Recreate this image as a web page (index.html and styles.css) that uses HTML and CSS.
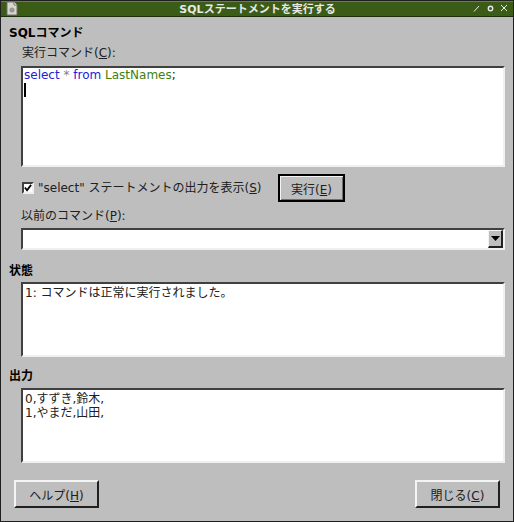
FILE: index.html
```html
<!DOCTYPE html>
<html lang="ja">
<head>
<meta charset="utf-8">
<title>SQLステートメントを実行する</title>
<link rel="stylesheet" href="styles.css">
</head>
<body>
<div class="window">
  <header class="titlebar">
    <svg class="app-icon" width="14" height="15" viewBox="0 0 14 15"><path d="M2 1h7l3 3v10H2z" fill="#d8d8d0" stroke="#707068"/><path d="M9 1v3h3" fill="#fff" stroke="#707068"/><circle cx="7" cy="9" r="2.6" fill="#98988f"/></svg>
    <span class="title">SQLステートメントを実行する</span>
    <div class="win-controls">
      <svg width="9" height="9" viewBox="0 0 9 9"><path d="M2 7.5 7 2" stroke="#e8e8e8" fill="none"/></svg>
      <svg width="9" height="9" viewBox="0 0 9 9"><circle cx="4.5" cy="4.5" r="2.2" stroke="#e8e8e8" stroke-width="1.4" fill="none"/></svg>
      <svg width="9" height="9" viewBox="0 0 9 9"><path d="M1 1l6 6M7 1 1 7" stroke="#e8e8e8" fill="none"/></svg>
    </div>
  </header>
  <main class="content">
    <h2 class="heading first">SQLコマンド</h2>
    <section class="indent">
      <label class="label cmd-label">実行コマンド(<u>C</u>):</label>
      <div class="box editor">
        <div class="line"><span class="kw">select</span> <span class="op">*</span> <span class="kw">from</span> <span class="name">LastNames</span>;</div>
        <span class="caret"></span>
      </div>
      <div class="run-row">
        <span class="check"><svg width="8" height="8" viewBox="0 0 9 9"><path d="M1 4l2.4 3L8 1" stroke="#000" stroke-width="2" fill="none"/></svg></span>
        <span class="label check-label">"select" ステートメントの出力を表示(<u>S</u>)</span>
        <button class="btn default">実行(<u>E</u>)</button>
      </div>
      <label class="label prev-label">以前のコマンド(<u>P</u>):</label>
      <div class="box combo">
        <span class="combo-arrow"><svg width="9" height="5" viewBox="0 0 9 5"><path d="M0 0h9L4.5 5z" fill="#000"/></svg></span>
      </div>
    </section>
    <h2 class="heading status-h">状態</h2>
    <div class="indent"><div class="box log status-box"><div class="line">1: コマンドは正常に実行されました。</div></div></div>
    <h2 class="heading out-h">出力</h2>
    <div class="indent"><div class="box log out-box"><div class="line">0,すずき,鈴木,</div><div class="line">1,やまだ,山田,</div></div></div>
    <footer class="actions">
      <button class="btn wide">ヘルプ(<u>H</u>)</button>
      <button class="btn wide">閉じる(<u>C</u>)</button>
    </footer>
  </main>
</div>
</body>
</html>
```
FILE: styles.css
```css
* { box-sizing: border-box; }
html, body { margin: 0; padding: 0; }
body {
  width: 514px;
  height: 522px;
  overflow: hidden;
  background: #bebebe;
  font-family: "DejaVu Sans", "Noto Sans CJK JP", sans-serif;
  font-size: 12px;
  color: #000;
}
.window {
  width: 514px;
  height: 522px;
  border: 1px solid #202020;
  background: #bebebe;
  display: flex;
  flex-direction: column;
}
.titlebar {
  height: 16px;
  flex: none;
  background: #3b5c17;
  border-bottom: 1px solid #1c2c0c;
  box-shadow: inset 0 1px 0 #5f8a2e;
  display: flex;
  align-items: center;
  position: relative;
  padding: 0 4px;
}
.app-icon { flex: none; }
.title {
  position: absolute;
  left: 1px;
  right: 0;
  top: 1px;
  text-align: center;
  color: #e8e8e8;
  font-weight: bold;
  font-size: 11px;
  line-height: 15px;
}
.win-controls {
  margin-left: auto;
  display: flex;
  gap: 5px;
  position: relative;
}
.content {
  flex: 1;
  display: flex;
  flex-direction: column;
  padding: 0 8px;
}
.heading {
  margin: 0;
  font-size: 12px;
  font-weight: bold;
  line-height: 15px;
}
.heading.first { margin-top: 9px; }
.status-h { margin-top: 14px; }
.out-h { margin-top: 12px; }
.indent {
  padding-left: 12px;
  display: flex;
  flex-direction: column;
}
.label { display: block; line-height: 15px; color: #202020; }
.cmd-label { margin: 5px 0 0 1px; }
.box {
  background: #fff;
  border-style: solid;
  border-width: 2px;
  border-color: #404040 #f0f0f0 #f0f0f0 #404040;
  width: 484px;
}
.editor { height: 101px; margin-top: 5px; padding: 0 1px; }
.line { line-height: 14px; color: #202020; font-size: 12px; }
.kw { color: #2020d8; }
.name { color: #3f7f10; }
.op { color: #808080; }
.caret { display: block; width: 2px; height: 14px; background: #000; margin-top: 1px; }
.run-row { display: flex; align-items: center; height: 28px; margin-top: 7px; }
.check {
  width: 12px;
  height: 12px;
  margin-left: 1px;
  background: #fff;
  border: 2px solid;
  border-color: #404040 #f0f0f0 #f0f0f0 #404040;
  display: flex;
  align-items: center;
  justify-content: center;
  flex: none;
}
.check-label { margin-left: 4px; width: 240px; white-space: nowrap; }
.btn {
  font: inherit;
  color: #202020;
  background: #bebebe;
  border: 2px solid;
  border-color: #f4f4f4 #202020 #202020 #f4f4f4;
  padding: 0;
  height: 28px;
}
.btn.default { width: 67px; border: 2px solid #000; box-shadow: inset 1px 1px 0 #f4f4f4, inset -1px -1px 0 #707070; }
.prev-label { margin: 7px 0 0 0; }
.combo { height: 22px; margin-top: 4px; position: relative; width: 484px; }
.combo-arrow {
  position: absolute;
  top: 0;
  right: 0;
  width: 15px;
  height: 18px;
  background: #bebebe;
  border-style: solid;
  border-width: 1px 2px 2px 1px;
  border-color: #f4f4f4 #202020 #202020 #f4f4f4;
  display: flex;
  align-items: center;
  justify-content: center;
}
.log { height: 75px; padding: 2px 2px 0; }
.status-box { margin-top: 3px; }
.out-box { margin-top: 4px; }
.actions {
  display: flex;
  justify-content: space-between;
  padding: 0 5px;
  margin-top: 17px;
}
.btn.wide { width: 85px; }
```
